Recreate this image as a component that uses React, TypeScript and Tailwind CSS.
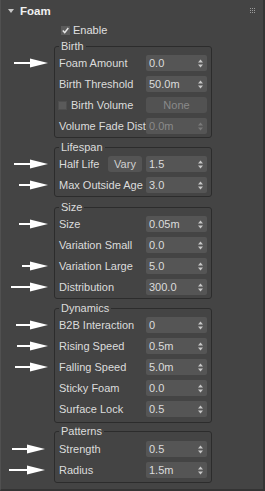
import React from "react";

const Arrow = ({ len, off = 10 }: { len: number; off?: number }) => (
  <svg
    width={len}
    height={10}
    viewBox={`0 0 ${len} 10`}
    className="absolute top-1/2 -translate-y-1/2"
    style={{ right: `calc(100% + ${off}px)` }}
  >
    <rect x={0} y={4} width={len - 16} height={2} fill="#ffffff" />
    <polygon points={`${len - 18},0.5 ${len},5 ${len - 18},9.5`} fill="#ffffff" />
  </svg>
);

const SpinArrows = ({ dim }: { dim?: boolean }) => (
  <svg width="5" height="9" viewBox="0 0 5 9" className="shrink-0">
    <polygon points="2.5,0.5 5,3.5 0,3.5" fill={dim ? "#7a7a7a" : "#c8c8c8"} />
    <polygon points="0,5.5 5,5.5 2.5,8.5" fill={dim ? "#7a7a7a" : "#c8c8c8"} />
  </svg>
);

const Spin = ({ v, disabled }: { v: string; disabled?: boolean }) => (
  <div className="w-[61px] h-[16px] shrink-0 rounded-[2px] bg-[#555555] flex items-center pl-[3px] pr-[4px]">
    <span className={disabled ? "flex-1 text-[#8a8a8a]" : "flex-1 text-[#dcdcdc]"}>{v}</span>
    <SpinArrows dim={disabled} />
  </div>
);

const Row = ({
  label,
  children,
  arrow,
  off,
}: {
  label: React.ReactNode;
  children?: React.ReactNode;
  arrow?: number;
  off?: number;
}) => (
  <div className="relative flex items-center h-[16px]">
    {arrow ? <Arrow len={arrow} off={off} /> : null}
    <div className="flex-1 flex items-center whitespace-nowrap pl-[1px]">{label}</div>
    {children}
  </div>
);

const Group = ({
  title,
  children,
  className,
  inner,
}: {
  title: string;
  children: React.ReactNode;
  className?: string;
  inner?: string;
}) => (
  <fieldset className={"border border-[#2c2c2c] rounded-[3px] pl-[3px] pr-[4px] min-w-0 " + (className ?? "pb-[3px]")}>
    <legend className="ml-[1px] px-[2px] leading-[14px] text-[#dcdcdc]">{title}</legend>
    <div className={"flex flex-col gap-[5px] " + (inner ?? "pt-[2px]")}>{children}</div>
  </fieldset>
);

export default function App() {
  return (
    <div
      className="w-[265px] h-[491px] bg-[#444444] relative overflow-hidden text-[11px] leading-[14px] text-[#dcdcdc] border-l border-l-[#505050] border-r-2 border-r-[#343434] border-b-2 border-b-[#343434]"
      style={{ fontFamily: '"Liberation Sans", Arial, sans-serif' }}
    >
      {/* Header */}
      <div className="h-[21px] flex items-center relative">
        <svg width="6" height="4" viewBox="0 0 6 4" className="ml-[7px]">
          <polygon points="0,0 6,0 3,4" fill="#c8c8c8" />
        </svg>
        <span className="ml-[6px] font-bold text-[11.5px] text-[#f0f0f0]">Foam</span>
        <div className="ml-auto mr-[8px] grid grid-cols-3 gap-[1px]">
          {Array.from({ length: 9 }).map((_, i) => (
            <div key={i} className="w-[1px] h-[1px] bg-[#9a9a9a]" />
          ))}
        </div>
      </div>

      {/* Enable */}
      <div className="mt-[4px] ml-[60px] flex items-center h-[10px] gap-[3px]">
        <div className="w-[9px] h-[9px] bg-[#5c5c5c] flex items-center justify-center">
          <svg width="7" height="7" viewBox="0 0 7 7">
            <polyline points="0.8,3.6 2.7,5.6 6.3,1" fill="none" stroke="#e6e6e6" strokeWidth="1.5" />
          </svg>
        </div>
        <span className="text-[#e0e0e0]">Enable</span>
      </div>

      <div className="ml-[53px] w-[158px] mt-[4px] flex flex-col">
        <Group title="Birth">
          <Row label="Foam Amount" arrow={34} off={10}>
            <Spin v="0.0" />
          </Row>
          <Row label="Birth Threshold">
            <Spin v="50.0m" />
          </Row>
          <Row
            label={
              <>
                <span className="w-[9px] h-[9px] bg-[#5a5a5a] border border-[#4e4e4e] mr-[4px] -ml-[1px] inline-block" />
                <span>Birth Volume</span>
              </>
            }
          >
            <div className="w-[61px] h-[16px] shrink-0 rounded-[3px] bg-[#525252] flex items-center justify-center text-[#8a8a8a]">
              None
            </div>
          </Row>
          <Row label="Volume Fade Dist">
            <Spin v="0.0m" disabled />
          </Row>
        </Group>

        <Group title="Lifespan" className="mt-[2px] pb-[3px]">
          <Row
            label={
              <div className="flex items-center w-full">
                <span className="flex-1">Half Life</span>
                <div className="w-[34px] h-[16px] rounded-[3px] bg-[#545454] flex items-center justify-center mr-[4px] text-[#d0d0d0]">
                  Vary
                </div>
              </div>
            }
            arrow={34}
            off={10}
          >
            <Spin v="1.5" />
          </Row>
          <Row label="Max Outside Age" arrow={29} off={10}>
            <Spin v="3.0" />
          </Row>
        </Group>

        <Group title="Size" className="mt-[3px] pb-[3px]">
          <Row label="Size" arrow={29} off={10}>
            <Spin v="0.05m" />
          </Row>
          <Row label="Variation Small">
            <Spin v="0.0" />
          </Row>
          <Row label="Variation Large" arrow={26} off={10}>
            <Spin v="5.0" />
          </Row>
          <Row label="Distribution" arrow={37} off={10}>
            <Spin v="300.0" />
          </Row>
        </Group>

        <Group title="Dynamics" className="mt-[2px] pb-[5px]">
          <Row label="B2B Interaction" arrow={32} off={10}>
            <Spin v="0" />
          </Row>
          <Row label="Rising Speed" arrow={31} off={10}>
            <Spin v="0.5m" />
          </Row>
          <Row label="Falling Speed" arrow={33} off={10}>
            <Spin v="5.0m" />
          </Row>
          <Row label="Sticky Foam">
            <Spin v="0.0" />
          </Row>
          <Row label="Surface Lock">
            <Spin v="0.5" />
          </Row>
        </Group>

        <Group title="Patterns" className="mt-[1px] pb-[4px]" inner="pt-[3px]">
          <Row label="Strength" arrow={33} off={13}>
            <Spin v="0.5" />
          </Row>
          <Row label="Radius" arrow={36} off={13}>
            <Spin v="1.5m" />
          </Row>
        </Group>
      </div>
    </div>
  );
}
